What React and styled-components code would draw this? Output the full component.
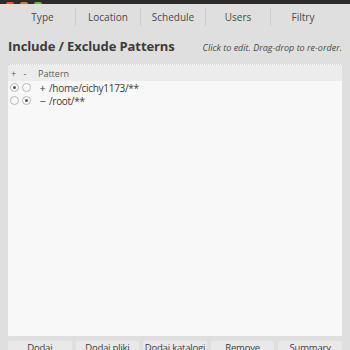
import React from 'react';
import styled, { createGlobalStyle } from 'styled-components';

const GlobalStyle = createGlobalStyle`
  html, body {
    margin: 0;
    padding: 0;
    background: #dfdfdf;
  }
  body {
    font-family: "Open Sans", "Noto Sans", sans-serif;
    color: #3c3c3c;
  }
`;

const Window = styled.div`
  width: 350px;
  height: 350px;
  overflow: hidden;
  display: flex;
  flex-direction: column;
  background: #dfdfdf;
  & > * {
    flex-shrink: 0;
  }
`;

const TitleBar = styled.div`
  height: 4px;
  background: #2d2c2a;
  display: flex;
  align-items: flex-end;
  gap: 6px;
  padding-left: 6px;
`;

const Dot = styled.div`
  width: 8px;
  height: 2px;
  border-radius: 4px 4px 0 0;
  background: ${p => p.color};
`;

const Tabs = styled.div`
  display: grid;
  grid-template-columns: repeat(5, 65px);
  margin: 0 0 0 10px;
  height: 26px;
  align-items: center;
`;

const Tab = styled.div`
  text-align: center;
  font-size: 10px;
  color: #4a4a4a;
  line-height: 18px;
  border-left: ${p => (p.first ? 'none' : '1px solid #cdcdcd')};
`;

const Header = styled.div`
  display: flex;
  justify-content: space-between;
  align-items: baseline;
  padding: 7px 8px 0 8px;
  height: 26px;
`;

const Title = styled.h1`
  margin: 0;
  font-size: 13px;
  font-weight: 700;
  letter-spacing: -0.1px;
  color: #3c3c3c;
`;

const Hint = styled.span`
  font-size: 9px;
  font-style: italic;
  color: #4a4a4a;
`;

const Panel = styled.div`
  margin: 1px 8px 0 8px;
  height: 271px;
  background: #f8f8f8;
  border-top: 1px dotted #d6d6d6;
  display: flex;
  flex-direction: column;
`;

const PanelHead = styled.div`
  display: flex;
  align-items: center;
  height: 16px;
  background: #ececec;
  font-size: 9px;
  color: #5a5a5a;
  padding-left: 1px;
`;

const HeadCell = styled.span`
  width: ${p => p.w}px;
  text-align: center;
`;

const Row = styled.div`
  display: flex;
  align-items: center;
  height: 13px;
  line-height: 12px;
  padding-left: 1px;
  font-size: 10px;
  letter-spacing: -0.3px;
  color: #3c3c3c;
`;

const Radio = styled.span`
  width: 9px;
  height: 9px;
  margin: 0 2px 0 1px;
  border-radius: 50%;
  border: 1px solid #b8b8b8;
  background: #fafafa;
  box-sizing: border-box;
  display: flex;
  align-items: center;
  justify-content: center;
  &::after {
    content: '';
    display: ${p => (p.checked ? 'block' : 'none')};
    width: 3px;
    height: 3px;
    border-radius: 50%;
    background: #555;
  }
`;

const Sign = styled.span`
  width: 11px;
  margin-left: 4px;
  text-align: center;
  font-size: 11px;
`;

const PatternText = styled.span`
  margin-left: 1px;
`;

const Footer = styled.div`
  display: grid;
  grid-template-columns: repeat(5, 1fr);
  gap: 4px;
  margin: 5px 8px 0 8px;
`;

const Button = styled.button`
  height: 22px;
  padding: 0;
  border: none;
  border-radius: 2px;
  background: #e9e9e9;
  font-family: inherit;
  font-size: 9.5px;
  line-height: 14px;
  letter-spacing: -0.2px;
  white-space: nowrap;
  overflow: hidden;
  color: #3c3c3c;
  display: flex;
  justify-content: center;
  align-items: flex-start;
`;

const tabs = ['Type', 'Location', 'Schedule', 'Users', 'Filtry'];
const rows = [
  { include: true, text: '/home/cichy1173/**' },
  { include: false, text: '/root/**' },
];
const buttons = ['Dodaj', 'Dodaj pliki', 'Dodaj katalogi', 'Remove', 'Summary'];

export default function App() {
  return (
    <Window>
      <GlobalStyle />
      <TitleBar>
        <Dot color="#e2582c" />
        <Dot color="#d07a3a" />
        <Dot color="#5cbf3d" />
      </TitleBar>
      <Tabs>
        {tabs.map((t, i) => (
          <Tab key={t} first={i === 0}>{t}</Tab>
        ))}
      </Tabs>
      <Header>
        <Title>Include / Exclude Patterns</Title>
        <Hint>Click to edit. Drag-drop to re-order.</Hint>
      </Header>
      <Panel>
        <PanelHead>
          <HeadCell w={9}>+</HeadCell>
          <HeadCell w={14}>-</HeadCell>
          <span style={{ marginLeft: 6 }}>Pattern</span>
        </PanelHead>
        {rows.map(r => (
          <Row key={r.text}>
            <Radio checked={r.include} />
            <Radio checked={!r.include} />
            <Sign>{r.include ? '+' : '−'}</Sign>
            <PatternText>{r.text}</PatternText>
          </Row>
        ))}
      </Panel>
      <Footer>
        {buttons.map(b => (
          <Button key={b}>{b}</Button>
        ))}
      </Footer>
    </Window>
  );
}
